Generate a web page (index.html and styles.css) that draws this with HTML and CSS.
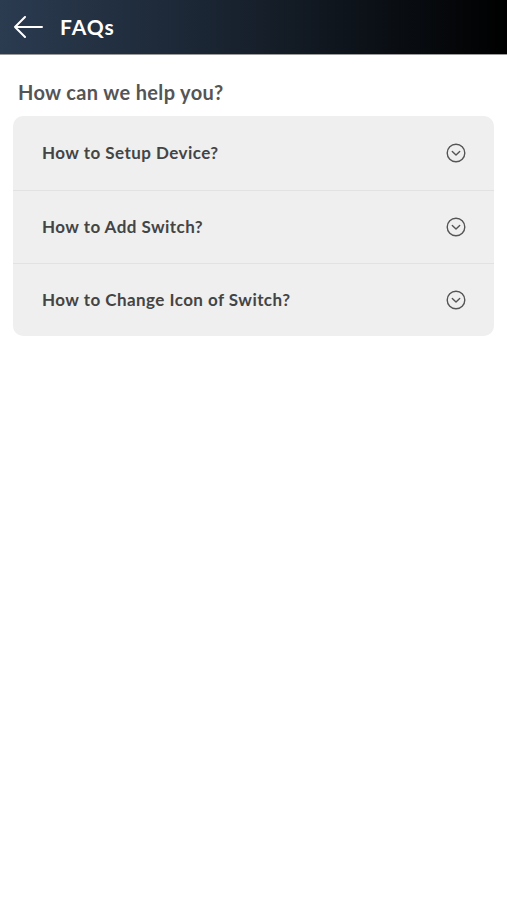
FILE: index.html
```html
<!DOCTYPE html>
<html>
<head>
<meta charset="utf-8">
<link rel="stylesheet" href="styles.css">
</head>
<body>
<header class="topbar">
  <svg class="back" width="30" height="22" viewBox="0 0 30 22"><path d="M29 11H2M12 1L2 11l10 10" fill="none" stroke="#fff" stroke-width="2" stroke-linecap="round" stroke-linejoin="round"/></svg>
  <h1 class="title">FAQs</h1>
</header>
<main class="content">
  <h2 class="subtitle">How can we help you?</h2>
  <div class="card">
    <div class="row"><span class="q">How to Setup Device?</span><svg class="chev" width="20" height="20" viewBox="0 0 20 20"><circle cx="10" cy="10" r="8.8" fill="none" stroke="#555" stroke-width="1.4"/><path d="M6.3 8.6L10 12.1l3.7-3.5" fill="none" stroke="#555" stroke-width="1.4" stroke-linecap="round" stroke-linejoin="round"/></svg></div>
    <div class="row"><span class="q">How to Add Switch?</span><svg class="chev" width="20" height="20" viewBox="0 0 20 20"><circle cx="10" cy="10" r="8.8" fill="none" stroke="#555" stroke-width="1.4"/><path d="M6.3 8.6L10 12.1l3.7-3.5" fill="none" stroke="#555" stroke-width="1.4" stroke-linecap="round" stroke-linejoin="round"/></svg></div>
    <div class="row"><span class="q">How to Change Icon of Switch?</span><svg class="chev" width="20" height="20" viewBox="0 0 20 20"><circle cx="10" cy="10" r="8.8" fill="none" stroke="#555" stroke-width="1.4"/><path d="M6.3 8.6L10 12.1l3.7-3.5" fill="none" stroke="#555" stroke-width="1.4" stroke-linecap="round" stroke-linejoin="round"/></svg></div>
  </div>
</main>
</body>
</html>
```
FILE: styles.css
```css
* { box-sizing: border-box; }
html, body { margin: 0; padding: 0; background: #fff; }
body { font-family: Lato, "Open Sans", sans-serif; width: 507px; height: 900px; }
.topbar {
  height: 55px;
  display: flex;
  align-items: center;
  padding-left: 13px;
  background: linear-gradient(90deg, #2b3b50 0%, #1b2634 40%, #000 100%);
  border-bottom: 1px solid #9a9a9a;
}
.back { display: block; }
.title {
  margin: 0 0 2px 17px;
  color: #fff;
  font-size: 21px;
  font-weight: 700;
  letter-spacing: 1px;
}
.content { padding: 0 13px; }
.subtitle {
  margin: 25px 0 0 5px;
  font-size: 20px;
  font-weight: 700;
  color: #555;
  line-height: 24px;
  letter-spacing: 0.35px;
}
.card {
  margin-top: 12px;
  background: #efefef;
  border-radius: 10px;
  overflow: hidden;
}
.row {
  height: 73px;
  display: flex;
  align-items: center;
  justify-content: space-between;
  padding: 0 28px 0 29px;
  border-top: 1px solid #e2e2e2;
}
.row:first-child { border-top: none; height: 74px; }
.row .q { margin-bottom: 2px; }
.q {
  font-size: 17px;
  font-weight: 700;
  color: #444;
  letter-spacing: 0.45px;
}
.chev { display: block; }
```
